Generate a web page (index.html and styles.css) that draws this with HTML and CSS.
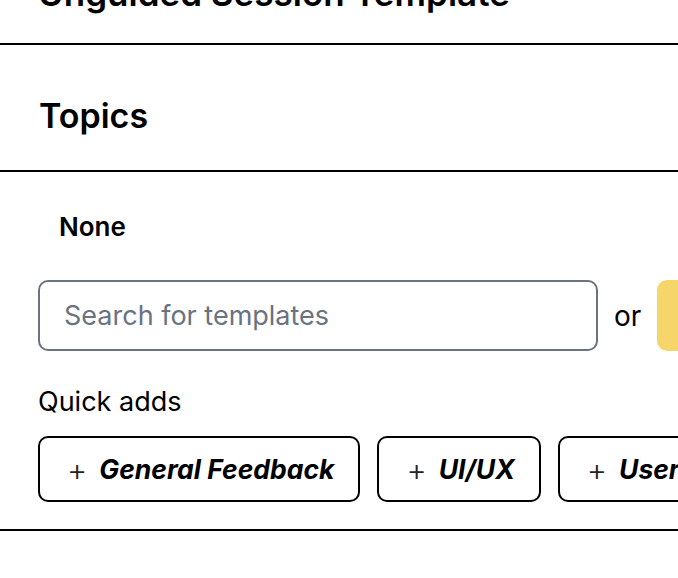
FILE: index.html
```html
<!DOCTYPE html>
<html>
<head>
<meta charset="utf-8">
<link rel="stylesheet" href="styles.css">
</head>
<body>
<div class="page">
  <section class="sec sec-title">
    <h1 class="title">Unguided Session Template</h1>
  </section>
  <section class="sec sec-topics">
    <h2 class="topics">Topics</h2>
  </section>
  <section class="sec sec-body">
    <div class="none">None</div>
    <div class="search-row">
      <input class="search" type="text" placeholder="Search for templates">
      <span class="or">or</span>
      <button class="create">Create new topic</button>
    </div>
    <div class="qa-label">Quick adds</div>
    <div class="chips">
      <button class="chip"><span class="plus">+</span><span class="chip-label">General Feedback</span></button>
      <button class="chip"><span class="plus">+</span><span class="chip-label">UI/UX</span></button>
      <button class="chip"><span class="plus">+</span><span class="chip-label">User Research</span></button>
    </div>
  </section>
</div>
</body>
</html>
```

FILE: styles.css
```css
html, body {
  margin: 0;
  padding: 0;
  background: #ffffff;
  overflow: hidden;
}
body {
  font-family: Inter, "Noto Sans", sans-serif;
  color: #000;
  width: 678px;
  height: 578px;
}
.page {
  width: 678px;
  overflow: hidden;
}
.sec {
  border-bottom: 2px solid #000;
}
.sec-title {
  padding: 0 38px 30px;
  margin-top: -27px;
}
.title {
  margin: 0;
  font-size: 35px;
  line-height: 40px;
  font-weight: 600;
  white-space: nowrap;
}
.sec-topics {
  padding: 17px 39px 0;
  height: 108px;
  display: flex;
  align-items: center;
}
.topics {
  margin: 0;
  font-size: 34px;
  font-weight: 600;
  line-height: 40px;
}
.sec-body {
  padding: 40px 0 27px 38px;
}
.none {
  margin-left: 21px;
  font-size: 26px;
  font-weight: 600;
  line-height: 30px;
}
.search-row {
  margin-top: 38px;
  display: flex;
  align-items: center;
  gap: 16px;
  white-space: nowrap;
}
.search {
  box-sizing: border-box;
  width: 560px;
  height: 71px;
  flex: none;
  border: 2px solid #6b7280;
  border-radius: 10px;
  padding: 0 24px;
  font-family: inherit;
  font-size: 27px;
  color: #111;
  outline: none;
}
.search::placeholder {
  color: #6b7280;
}
.or {
  font-size: 28px;
}
.create {
  flex: none;
  height: 71px;
  width: 220px;
  border: none;
  border-radius: 10px;
  background: #f6d66a;
  color: transparent;
  font-family: inherit;
  font-size: 24px;
}
.qa-label {
  margin-top: 36px;
  font-size: 27px;
  line-height: 30px;
}
.chips {
  margin-top: 19px;
  display: flex;
  gap: 17px;
  white-space: nowrap;
}
.chip {
  flex: none;
  box-sizing: border-box;
  height: 66px;
  border: 2px solid #000;
  border-radius: 10px;
  background: #fff;
  padding: 0 24px 0 27px;
  display: flex;
  align-items: center;
  font-family: inherit;
  color: #000;
}
.plus {
  font-size: 31px;
  font-weight: 300;
  color: #222;
  margin-right: 12px;
}
.chip-label {
  font-size: 26.5px;
  font-weight: 700;
  font-style: italic;
}
```
